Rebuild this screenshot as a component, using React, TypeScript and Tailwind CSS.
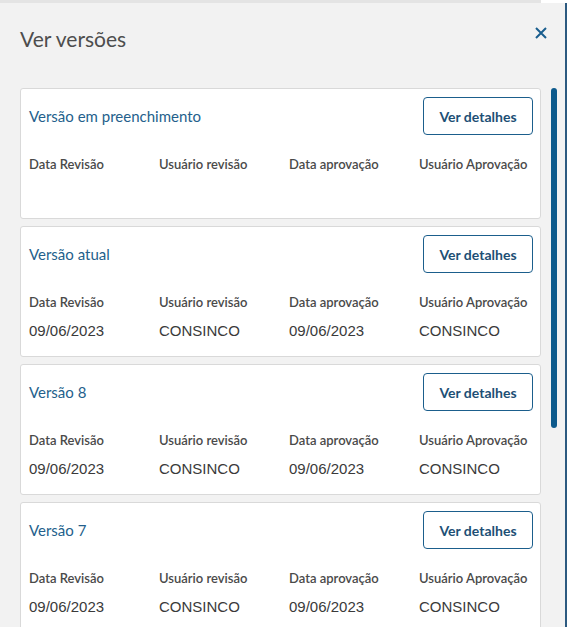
const versions = [
  { name: "Versão em preenchimento", dataRev: "", userRev: "", dataApr: "", userApr: "" },
  { name: "Versão atual", dataRev: "09/06/2023", userRev: "CONSINCO", dataApr: "09/06/2023", userApr: "CONSINCO" },
  { name: "Versão 8", dataRev: "09/06/2023", userRev: "CONSINCO", dataApr: "09/06/2023", userApr: "CONSINCO" },
  { name: "Versão 7", dataRev: "09/06/2023", userRev: "CONSINCO", dataApr: "09/06/2023", userApr: "CONSINCO" },
];

const labels = ["Data Revisão", "Usuário revisão", "Data aprovação", "Usuário Aprovação"];

function VersionCard({ v }: { v: (typeof versions)[number] }) {
  const values = [v.dataRev, v.userRev, v.dataApr, v.userApr];
  return (
    <div className="bg-white border border-[#d9d9d9] rounded-[3px] pl-2 pr-[7px] pt-2 pb-[15px] shrink-0">
      <div className="flex items-center justify-between h-[38px]">
        <span className="text-[15px] text-[#245f8c] font-['Lato',sans-serif]">{v.name}</span>
        <button className="w-[110px] h-[38px] border border-[#1b5e8c] rounded-[4px] text-[14px] font-bold text-[#1d4f75] font-['Lato',sans-serif]">
          Ver detalhes
        </button>
      </div>
      <div className="grid grid-cols-[130px_130px_130px_130px] mt-[21px]">
        {labels.map((l) => (
          <span key={l} className="text-[13px] leading-4 font-semibold text-[#4a4a4a] font-['Lato',sans-serif] whitespace-nowrap">{l}</span>
        ))}
      </div>
      <div className="grid grid-cols-[130px_130px_130px_130px] mt-[11px] h-5">
        {values.map((val, i) => (
          <span key={i} className="text-[15px] leading-5 text-[#3a3a3a] font-['Liberation_Sans',sans-serif]">{val}</span>
        ))}
      </div>
    </div>
  );
}

export default function App() {
  return (
    <div className="h-[627px] w-[567px] overflow-hidden flex flex-col bg-[#f2f2f2]">
      <div className="h-[3px] flex shrink-0">
        <div className="flex-1 bg-[#e4e4e4]" />
        <div className="w-[26px] bg-white" />
      </div>
      <div className="flex-1 flex min-h-0">
        <div className="flex-1 flex flex-col min-h-0">
          <div className="h-[85px] shrink-0 flex justify-between pl-5 pr-[16px] pt-[22px]">
            <h2 className="text-[21px] text-[#4d4d4d] font-['Lato',sans-serif] leading-7">Ver versões</h2>
            <button className="text-[#1a5e8e] mt-0 h-4 w-4 flex items-center justify-center">
              <svg width="12" height="12" viewBox="0 0 12 12" fill="none" stroke="currentColor" strokeWidth="2">
                <path d="M1 1L11 11M11 1L1 11" />
              </svg>
            </button>
          </div>
          <div className="flex-1 flex min-h-0">
            <div className="w-[521px] ml-5 flex flex-col gap-[7px] overflow-hidden">
              {versions.map((v) => (
                <VersionCard key={v.name} v={v} />
              ))}
            </div>
            <div className="flex-1 flex justify-center pl-[1px]">
              <div className="w-[6px] h-[340px] rounded-full bg-[#0d5a8c]" />
            </div>
          </div>
        </div>
        <div className="w-[2px] bg-[#2c5a80]" />
      </div>
    </div>
  );
}
